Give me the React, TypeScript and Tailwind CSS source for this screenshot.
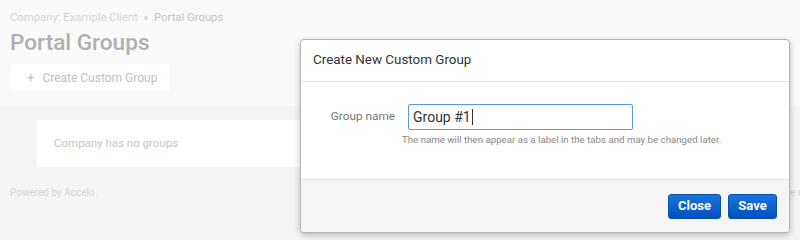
import React from "react";

export default function App() {
  return (
    <div className="relative w-[800px] h-[240px] overflow-hidden bg-[#f4f4f4] font-['Roboto',sans-serif]">
      {/* background page */}
      <div className="bg-[#fafafa] h-[106px] pl-[10px] pt-[10px]">
        <div className="flex items-center gap-[6px] text-[11.3px] leading-[16px]">
          <span className="text-[#d4d4d4]">Company: Example Client</span>
          <span className="w-[4px] h-[4px] rounded-full bg-[#d8d8d8]" />
          <span className="text-[#c2c2c2]">Portal Groups</span>
        </div>
        <div className="mt-[4px] text-[22.6px] leading-[26px] font-medium text-[#b0b0b0]">Portal Groups</div>
        <div className="mt-[8px] w-[160px] h-[27px] bg-white rounded-[2px] shadow-[0_0_2px_rgba(0,0,0,0.04)] flex items-center pl-[17px] gap-[8px] text-[12px] text-[#c0c0c0]">
          <span className="text-[13px]">+</span>
          <span>Create Custom Group</span>
        </div>
      </div>
      <div className="px-[10px] pt-[14px]">
        <div className="ml-[27px] h-[47px] bg-white flex items-center pl-[17px] text-[11.5px] text-[#c6c6c6]">
          Company has no groups
        </div>
        <div className="mt-[18px] flex justify-between text-[10px] text-[#d6d6d6]">
          <span>Powered by Accelo.</span>
          <span className="mr-[-24px]">Terms of Use | Acceptable use</span>
        </div>
      </div>

      {/* modal */}
      <div className="absolute left-[300px] top-[39px] w-[490px] h-[194px] bg-white border border-[#b5b5b5] rounded-[4px] shadow-[0_2px_6px_rgba(0,0,0,0.25)] flex flex-col overflow-hidden">
        <div className="h-[42px] border-b border-[#e6e6e6] flex items-center pl-[12px] text-[13.4px] text-[#333]">
          Create New Custom Group
        </div>
        <div className="flex-1 pt-[22px]">
          <div className="flex items-center">
            <span className="w-[94px] text-right text-[11.8px] text-[#777]">Group name</span>
            <div className="ml-[13px] w-[225px] h-[26px] border border-[#5b9ad6] rounded-[2px] flex items-center pl-[4px] text-[14px] text-[#333] shadow-[inset_0_1px_1px_rgba(0,0,0,0.06)]">
              Group #1<span className="ml-[1px] w-px h-[16px] bg-[#333]" />
            </div>
          </div>
          <div className="ml-[101px] mt-[3px] text-[9.7px] text-[#888]">
            The name will then appear as a label in the tabs and may be changed later.
          </div>
        </div>
        <div className="h-[53px] bg-[#f5f5f5] border-t border-[#e2e2e2] flex items-center justify-end gap-[7px] pr-[12px]">
          <button className="w-[53px] h-[25px] rounded-[3px] bg-gradient-to-b from-[#1a74dc] to-[#0050c0] border border-[#0a4fa8] text-white text-[13px] font-bold">
            Close
          </button>
          <button className="w-[49px] h-[25px] rounded-[3px] bg-gradient-to-b from-[#1a74dc] to-[#0050c0] border border-[#0a4fa8] text-white text-[13px] font-bold">
            Save
          </button>
        </div>
      </div>
    </div>
  );
}
